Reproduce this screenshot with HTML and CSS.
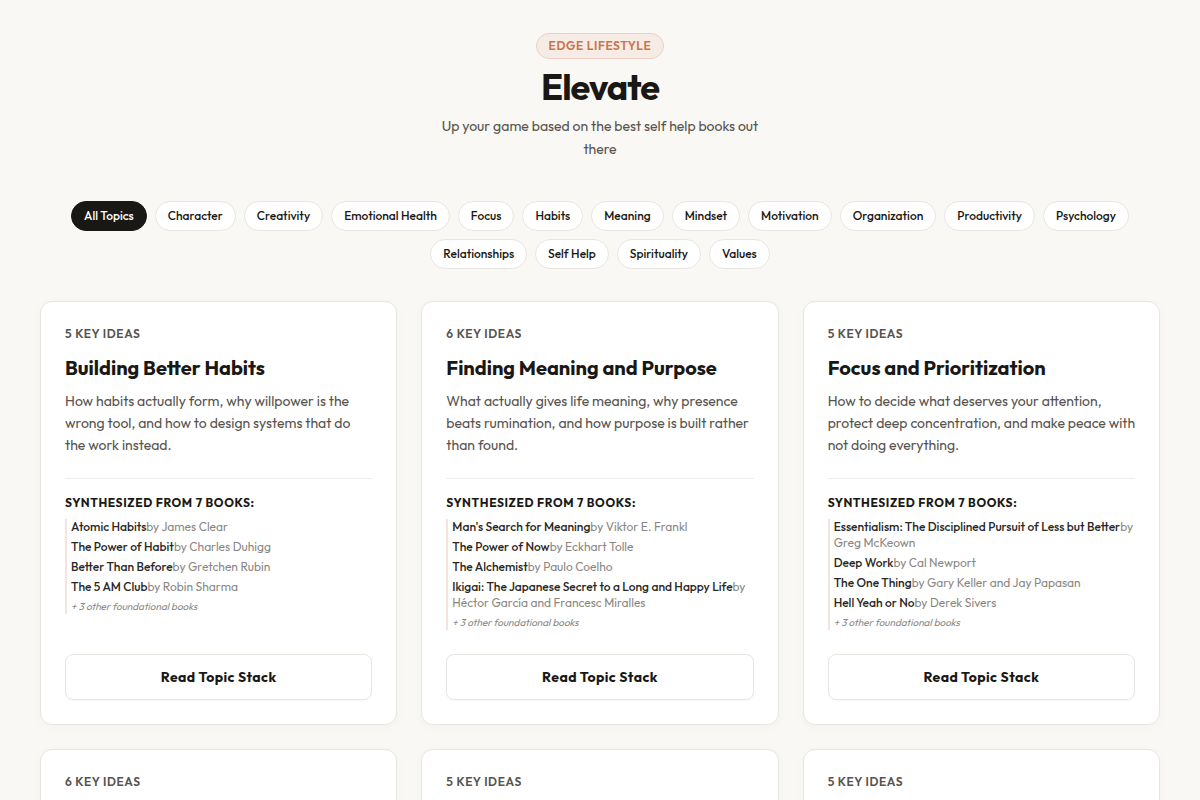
FILE: index.html
```html
<!DOCTYPE html>
<html lang="en">
<head>
  <meta charset="UTF-8" />
  <meta name="viewport" content="width=device-width, initial-scale=1.0" />
  <title>Elevate</title>
  <link rel="stylesheet" href="styles.css">
</head>
<body>
  <div class="container">
    <header class="hero">
      <span class="badge">EDGE LIFESTYLE</span>
      <h1>Elevate</h1>
      <p class="subtitle">Up your game based on the best self help books out there</p>
    </header>

    <nav class="filters" aria-label="Topics">
      <button type="button" class="filter active">All Topics</button>
      <button type="button" class="filter">Character</button>
      <button type="button" class="filter">Creativity</button>
      <button type="button" class="filter">Emotional Health</button>
      <button type="button" class="filter">Focus</button>
      <button type="button" class="filter">Habits</button>
      <button type="button" class="filter">Meaning</button>
      <button type="button" class="filter">Mindset</button>
      <button type="button" class="filter">Motivation</button>
      <button type="button" class="filter">Organization</button>
      <button type="button" class="filter">Productivity</button>
      <button type="button" class="filter">Psychology</button>
      <button type="button" class="filter">Relationships</button>
      <button type="button" class="filter">Self Help</button>
      <button type="button" class="filter">Spirituality</button>
      <button type="button" class="filter">Values</button>
    </nav>

    <main class="grid">
      <article class="card">
        <div class="idea-count">5 KEY IDEAS</div>
        <h2>Building Better Habits</h2>
        <p class="description">How habits actually form, why willpower is the wrong tool, and how to design systems that do the work instead.</p>
        <div class="sources">
          <h3>SYNTHESIZED FROM 7 BOOKS:</h3>
          <ul class="books">
            <li><strong>Atomic Habits</strong>by James Clear</li>
            <li><strong>The Power of Habit</strong>by Charles Duhigg</li>
            <li><strong>Better Than Before</strong>by Gretchen Rubin</li>
            <li><strong>The 5 AM Club</strong>by Robin Sharma</li>
            <li class="more">+ 3 other foundational books</li>
          </ul>
        </div>
        <a href="#" class="read-link">Read Topic Stack</a>
      </article>

      <article class="card">
        <div class="idea-count">6 KEY IDEAS</div>
        <h2>Finding Meaning and Purpose</h2>
        <p class="description">What actually gives life meaning, why presence beats rumination, and how purpose is built rather than found.</p>
        <div class="sources">
          <h3>SYNTHESIZED FROM 7 BOOKS:</h3>
          <ul class="books">
            <li><strong>Man's Search for Meaning</strong>by Viktor E. Frankl</li>
            <li><strong>The Power of Now</strong>by Eckhart Tolle</li>
            <li><strong>The Alchemist</strong>by Paulo Coelho</li>
            <li><strong>Ikigai: The Japanese Secret to a Long and Happy Life</strong>by Héctor García and Francesc Miralles</li>
            <li class="more">+ 3 other foundational books</li>
          </ul>
        </div>
        <a href="#" class="read-link">Read Topic Stack</a>
      </article>

      <article class="card">
        <div class="idea-count">5 KEY IDEAS</div>
        <h2>Focus and Prioritization</h2>
        <p class="description">How to decide what deserves your attention, protect deep concentration, and make peace with not doing everything.</p>
        <div class="sources">
          <h3>SYNTHESIZED FROM 7 BOOKS:</h3>
          <ul class="books">
            <li><strong>Essentialism: The Disciplined Pursuit of Less but Better</strong>by Greg McKeown</li>
            <li><strong>Deep Work</strong>by Cal Newport</li>
            <li><strong>The One Thing</strong>by Gary Keller and Jay Papasan</li>
            <li><strong>Hell Yeah or No</strong>by Derek Sivers</li>
            <li class="more">+ 3 other foundational books</li>
          </ul>
        </div>
        <a href="#" class="read-link">Read Topic Stack</a>
      </article>

      <article class="card">
        <div class="idea-count">6 KEY IDEAS</div>
      </article>
      <article class="card">
        <div class="idea-count">5 KEY IDEAS</div>
      </article>
      <article class="card">
        <div class="idea-count">5 KEY IDEAS</div>
      </article>
    </main>
  </div>
</body>
</html>
```
FILE: styles.css
```css
* {
  box-sizing: border-box;
  margin: 0;
  padding: 0;
}

body {
  font-family: Outfit, Lato, sans-serif;
  background: #f9f8f4;
  color: #1a1814;
}

.container {
  max-width: 1200px;
  margin: 0 auto;
  padding: 33px 40px;
}

.hero {
  display: flex;
  flex-direction: column;
  align-items: center;
  text-align: center;
  margin-bottom: 40px;
}

.badge {
  padding: 4px 12px;
  border: 1px solid #ecd0c2;
  border-radius: 20px;
  background: #f6ebe5;
  color: #c87548;
  font-size: 12px;
  font-weight: 600;
  line-height: 16px;
  letter-spacing: 0.05em;
}

h1 {
  margin: 6px 0;
  font-size: 36px;
  font-weight: 700;
  line-height: 44px;
  letter-spacing: -1px;
}

.subtitle {
  max-width: 340px;
  color: #57534e;
  font-size: 14px;
  line-height: 23px;
}

.filters {
  display: flex;
  flex-wrap: wrap;
  justify-content: center;
  gap: 8px;
  margin-bottom: 32px;
}

.filter {
  padding: 6px 12px;
  border: 1px solid #e8e6e1;
  border-radius: 20px;
  background: #fff;
  color: #1a1814;
  font-family: inherit;
  font-size: 12px;
  font-weight: 500;
  line-height: 16px;
  cursor: pointer;
}

.filter.active {
  border-color: #1a1814;
  background: #1a1814;
  color: #fff;
}

.grid {
  display: grid;
  grid-template-columns: repeat(auto-fit, minmax(300px, 1fr));
  gap: 24px;
}

.card {
  display: flex;
  flex-direction: column;
  padding: 24px;
  border: 1px solid #e8e6e1;
  border-radius: 12px;
  background: #fff;
  box-shadow: 0 2px 8px rgba(0, 0, 0, 0.03);
}

.idea-count {
  color: #57534e;
  font-size: 12px;
  font-weight: 600;
  line-height: 16px;
  letter-spacing: 0.05em;
}

h2 {
  margin: 12px 0 8px;
  font-size: 20px;
  font-weight: 700;
  line-height: 28px;
}

.description {
  margin: 0 -1px 22px 0;
  color: #57534e;
  font-size: 14px;
  line-height: 22px;
}

.sources {
  padding-top: 16px;
  border-top: 1px solid #f0eeea;
  margin-bottom: 24px;
}

h3 {
  margin-bottom: 8px;
  font-size: 12px;
  font-weight: 700;
  line-height: 16px;
  letter-spacing: 0.05em;
}

.books {
  display: flex;
  flex-direction: column;
  gap: 4px;
  padding-left: 4px;
  border-left: 2px solid #f4e4dd;
  list-style: none;
  color: #8a8783;
  font-size: 12px;
  line-height: 16px;
}

.books strong {
  color: #2a2824;
  font-weight: 500;
}

.books .more {
  font-size: 10px;
  font-style: italic;
  line-height: 15px;
}

.read-link {
  margin-top: auto;
  padding: 12px;
  border: 1px solid #e8e6e1;
  border-radius: 8px;
  box-shadow: 0 1px 2px rgba(0, 0, 0, 0.03);
  color: #1a1814;
  font-size: 14px;
  font-weight: 700;
  line-height: 20px;
  letter-spacing: 0.03em;
  text-align: center;
  text-decoration: none;
}
```
